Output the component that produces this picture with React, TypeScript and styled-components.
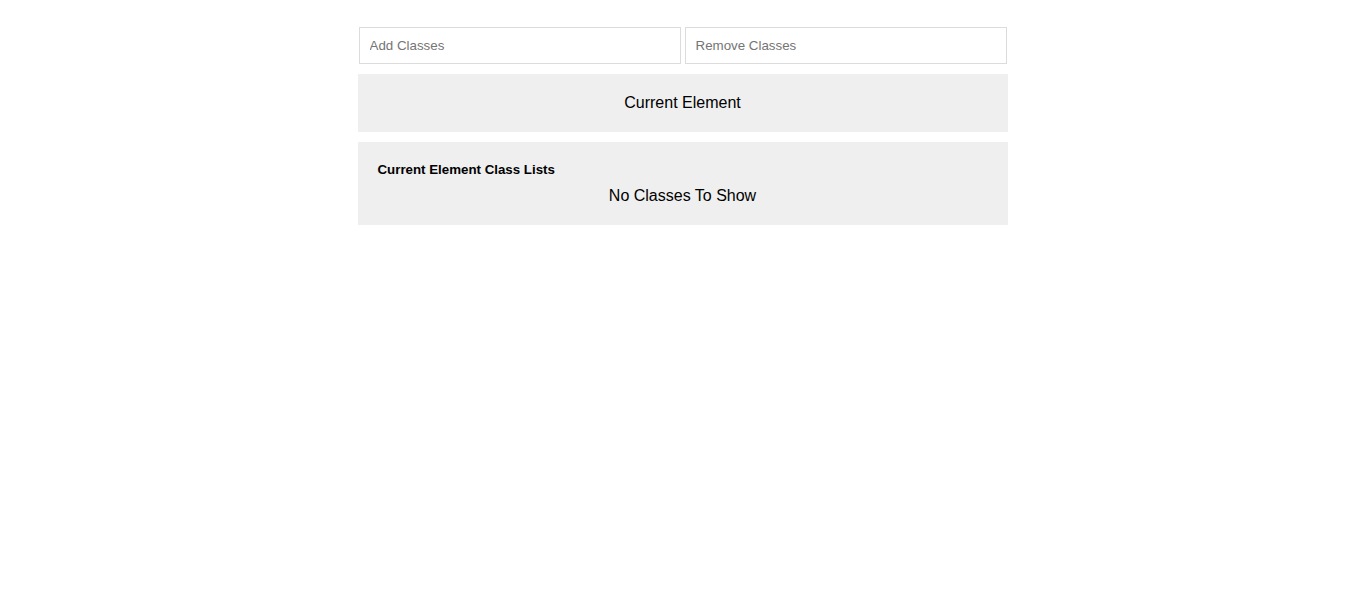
import React from "react";
import styled, { createGlobalStyle } from "styled-components";

const Global = createGlobalStyle`
  html, body { margin: 0; padding: 0; background: #ffffff; }
  body { font-family: "Liberation Sans", Arial, sans-serif; color: #000; }
`;

const Wrapper = styled.div`
  width: 650px;
  margin: 27px auto 0;
  display: flex;
  flex-direction: column;
  gap: 10px;
`;

const InputRow = styled.div`
  display: flex;
  gap: 4px;
  padding: 0 1px;
`;

const ClassInput = styled.input`
  box-sizing: border-box;
  flex: 1 1 0;
  min-width: 0;
  height: 37px;
  padding: 0 10px;
  border: 1px solid #dcdcdc;
  background: #fff;
  font-family: "Liberation Sans", Arial, sans-serif;
  font-size: 13.333px;
  color: #333;
  outline: none;
  &::placeholder { color: #757575; }
`;

const Panel = styled.div`
  background: #efefef;
  padding: 20px;
`;

const ElementTitle = styled.div`
  text-align: center;
  font-size: 16px;
  line-height: 18px;
`;

const ListTitle = styled.div`
  font-size: 13.3px;
  font-weight: bold;
  line-height: 15px;
  margin-bottom: 10px;
`;

const EmptyText = styled.div`
  text-align: center;
  font-size: 16px;
  line-height: 18px;
`;

export default function App() {
  return (
    <>
      <Global />
      <Wrapper>
        <InputRow>
          <ClassInput placeholder="Add Classes" />
          <ClassInput placeholder="Remove Classes" />
        </InputRow>
        <Panel>
          <ElementTitle>Current Element</ElementTitle>
        </Panel>
        <Panel>
          <ListTitle>Current Element Class Lists</ListTitle>
          <EmptyText>No Classes To Show</EmptyText>
        </Panel>
      </Wrapper>
    </>
  );
}
